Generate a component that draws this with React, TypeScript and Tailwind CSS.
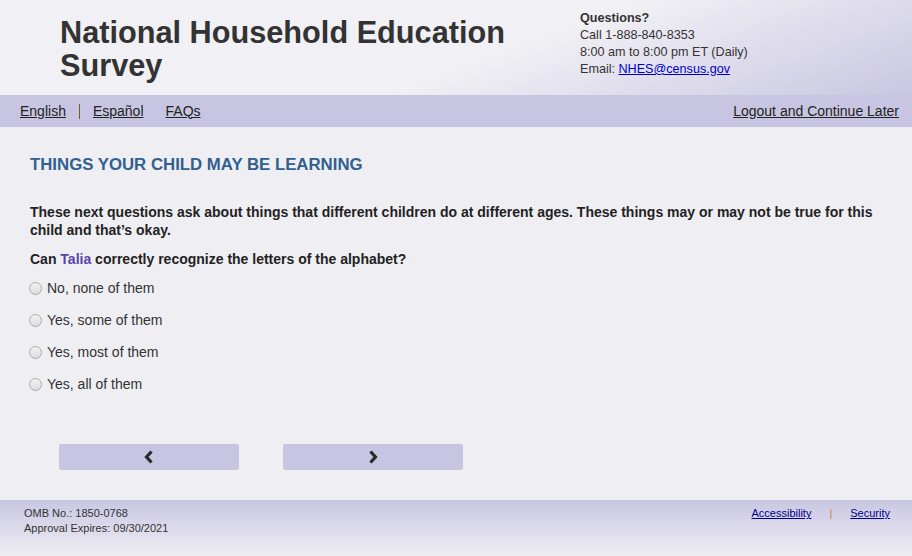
const options = ["No, none of them", "Yes, some of them", "Yes, most of them", "Yes, all of them"];

function Radio({ label }: { label: string }) {
  return (
    <label className="flex items-center h-[32px] gap-[5px] cursor-pointer">
      <span className="w-[13px] h-[13px] rounded-full border border-[#a9a9a9] bg-gradient-to-b from-[#f4f4f4] to-[#dcdcdc] shrink-0" />
      <span className="text-[14px] text-[#333]">{label}</span>
    </label>
  );
}

function Chevron({ dir }: { dir: "left" | "right" }) {
  return (
    <svg width="10" height="14" viewBox="0 0 10 14" className="text-[#2a2a2a]">
      <path
        d={dir === "left" ? "M7.5 1.5 L2.5 7 L7.5 12.5" : "M2.5 1.5 L7.5 7 L2.5 12.5"}
        fill="none"
        stroke="currentColor"
        strokeWidth="3.2"
        strokeLinejoin="miter"
      />
    </svg>
  );
}

export default function App() {
  return (
    <div className="w-[912px] h-[556px] flex flex-col bg-[#efeef3] text-[#333] font-['Liberation_Sans',Arial,sans-serif] overflow-hidden">
      {/* Header */}
      <header className="h-[95px] flex bg-[linear-gradient(160deg,#f1f0f4_55%,#c9c6e2_100%)]">
        <div className="w-[580px] pl-[60px] pt-[16px]">
          <h1 className="text-[30.7px] font-bold leading-[33px] text-[#333]">
            National Household Education
            <br />
            Survey
          </h1>
        </div>
        <div className="pt-[10px] text-[12.6px] leading-[17px] text-[#333]">
          <p className="font-bold">Questions?</p>
          <p>Call 1-888-840-8353</p>
          <p>8:00 am to 8:00 pm ET (Daily)</p>
          <p>
            Email: <a href="#" className="underline text-[#0000cc]">NHES@census.gov</a>
          </p>
        </div>
      </header>

      {/* Nav */}
      <nav className="h-[32px] bg-[#c8c5e2] flex items-center justify-between pl-[20px] pr-[13px] text-[14px] text-[#222]">
        <div className="flex items-center">
          <a href="#" className="underline">English</a>
          <span className="mx-[13px] w-px h-[15px] bg-[#7a5a2a]" />
          <a href="#" className="underline">Español</a>
          <a href="#" className="underline ml-[22px]">FAQs</a>
        </div>
        <a href="#" className="underline">Logout and Continue Later</a>
      </nav>

      {/* Main */}
      <main className="flex-1 pl-[30px] pr-[30px] pt-[28px]">
        <h2 className="text-[16.8px] font-bold text-[#30608f] leading-[20px]">THINGS YOUR CHILD MAY BE LEARNING</h2>
        <p className="mt-[28px] text-[14px] font-bold leading-[18px] text-[#222]">
          These next questions ask about things that different children do at different ages. These things may or may not be true for this child and that’s okay.
        </p>
        <p className="mt-[11px] text-[14px] font-bold leading-[18px] text-[#222]">
          Can <span className="text-[#5546a8]">Talia</span> correctly recognize the letters of the alphabet?
        </p>
        <div className="mt-[4px] flex flex-col -ml-[1px]">
          {options.map((o) => (
            <Radio key={o} label={o} />
          ))}
        </div>
        <div className="mt-[44px] ml-[29px] flex gap-[44px]">
          <button className="w-[180px] h-[26px] bg-[#c8c5e2] rounded-[2px] flex items-center justify-center">
            <Chevron dir="left" />
          </button>
          <button className="w-[180px] h-[26px] bg-[#c8c5e2] rounded-[2px] flex items-center justify-center">
            <Chevron dir="right" />
          </button>
        </div>
      </main>

      {/* Footer */}
      <footer className="h-[56px] bg-[linear-gradient(180deg,#c9c6e2_0%,#efeef3_100%)] flex justify-between pl-[24px] pr-[22px] pt-[6px] text-[11px] leading-[15px] text-[#333]">
        <div>
          <p>OMB No.: 1850-0768</p>
          <p>Approval Expires: 09/30/2021</p>
        </div>
        <div className="flex items-start">
          <a href="#" className="underline text-[#00008b]">Accessibility</a>
          <span className="mx-[18px] text-[#c8884a]">|</span>
          <a href="#" className="underline text-[#00008b]">Security</a>
        </div>
      </footer>
    </div>
  );
}
